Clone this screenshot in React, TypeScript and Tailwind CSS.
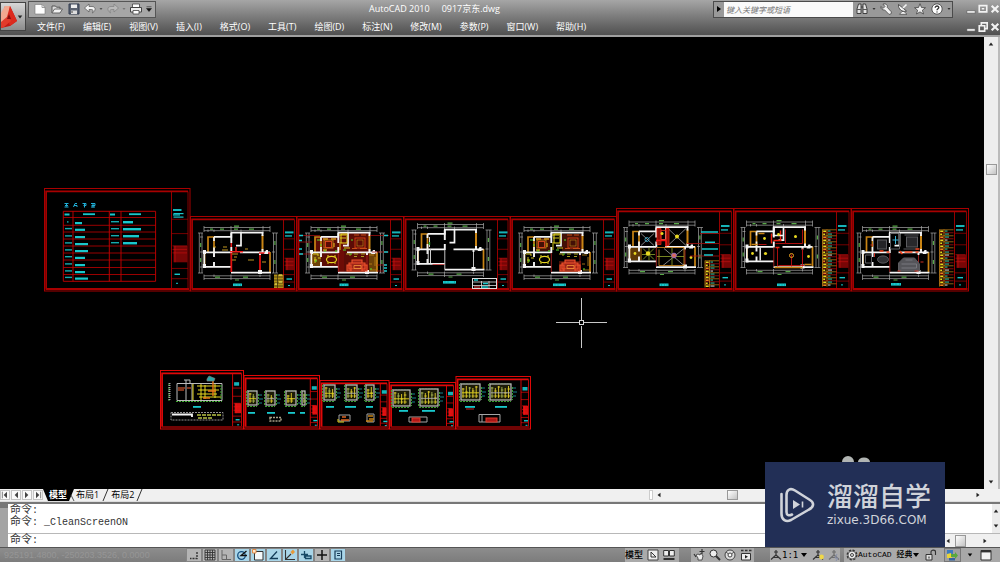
import React from 'react';

const RED = '#a80000';
const BRIGHT = '#f01414';
const CYAN = '#18c8cc';
const WALL = '#f4f4f4';
const GOLD = '#c88414';
const YELLOW = '#e8d820';
const GREEN = '#3fae30';

const menus = [
  '文件(F)', '编辑(E)', '视图(V)', '插入(I)', '格式(O)', '工具(T)',
  '绘图(D)', '标注(N)', '修改(M)', '参数(P)', '窗口(W)', '帮助(H)',
];

/* ---------- drawing sheets ---------- */

type SheetProps = { x: number; y: number; w: number; h: number; div: number; color?: string; small?: boolean };

function Sheet({ x, y, w, h, div, color = RED, small = false }: SheetProps) {
  const b = y + h;
  const r = x + w;
  const t = b - h * 0.44;
  const stampH = h * (small ? 0.17 : 0.16);
  return (
    <g fill="none" stroke={color}>
      <rect x={x} y={y} width={w} height={h} strokeWidth="1" />
      <path d={`M${x + 1.6} ${b - 2.4}V${y + 2.8}H${r - 2}`} strokeWidth="1.7" />
      <path d={`M${x + 1} ${b - 2}H${r - 1}`} strokeWidth={small ? 1.2 : 2} />
      <path d={`M${div} ${y + 3}V${b - 3}`} strokeWidth="0.9" />
      <path d={`M${r - 2} ${y + 3}V${b - 3}`} strokeWidth="0.8" />
      <path
        d={`M${div} ${y + h * 0.3}H${r - 2}M${div} ${y + h * 0.44}H${r - 2}M${div} ${b - h * 0.22}H${r - 2}M${div} ${b - h * 0.12}H${r - 2}`}
        strokeWidth="0.7"
      />
      <rect x={div + 2} y={t} width={r - div - 4.5} height={stampH} fill={small ? '#d81010' : '#780606'} stroke="none" />
      <path d={`M${div + 1} ${t}H${r - 3}M${div + 1} ${t + 3.5}H${r - 3}M${div + 1} ${t + 7}H${r - 3}M${div + 3.5} ${t}v${stampH}`} stroke={small ? BRIGHT : '#cc1010'} strokeWidth="0.6" />
      <rect x={div + 1.5} y={y + h * 0.2} width={small ? 5 : 8.5} height={small ? 3.5 : 2} fill={CYAN} stroke="none" opacity="0.9" />
      {!small && <rect x={div + 1.5} y={y + h * 0.25} width="7" height="1.6" fill={CYAN} stroke="none" opacity="0.8" />}
      <rect x={div + 3} y={b - h * 0.17} width={small ? 4 : 5.5} height="1.4" fill={CYAN} stroke="none" />
      <rect x={div + 4.5} y={b - h * 0.08} width="2" height="1" fill={CYAN} stroke="none" />
    </g>
  );
}

type PlanKind = 'demo' | 'color' | 'bare' | 'furnish' | 'ceiling' | 'light' | 'socket';

function Dims() {
  return (
    <g fill="none" stroke="#a8a8a8" strokeWidth="0.7">
      <path d="M204 227.5H270M204 230.7H270M204 226V232M208 229.5V232M214 229.5V232M231 226V232M241 229.5V232M263 226V232M270 226V232" />
      <path d="M204 275.8H270M204 278.6H270M204 274.5V280M214 274.5V277M231 274.5V280M260 274.5V277M270 274.5V280" />
      <path d="M199.3 233V273M202 233V273M198 233H203M200 237H203M200 252H203M200 267H203M198 273H203" />
      <path d="M273.5 233V273M276.3 233V273M272 233H278M272 252H275M272 273H278" />
      <path d="M210 229.2H213M220 229.2H224M234 229.2H238M249 229.2H254M234 226.2H239M215 277.2H220M243 277.2H248M235 280H239M200.7 243V247M200.7 258V262M274.9 241V245M274.9 260V264" stroke="#57a847" strokeWidth="1.2" />
    </g>
  );
}

function Walls({ kind }: { kind: PlanKind }) {
  const demo = kind === 'demo';
  return (
    <g fill="none">
      <path d="M208 252V237H214V252M204.5 252.5V266M270 252V272" stroke={GOLD} strokeWidth="1.7" />
      <path d="M262.5 235V251" stroke={GOLD} strokeWidth="2" />
      <path d="M214 236.8H231.3V232.7H263.3M241 233V245.6H236M214 237V241M214 247V252M204 252.4H231M240 252.4H270M204.3 252V266.8H231.3M231 272.6H271" stroke={WALL} strokeWidth="1.7" />
      <path d="M231.3 233V243M231.3 247V253M214 252V257M214 262V267M262.5 232V236M262.5 249V252M260 252V255" stroke={WALL} strokeWidth="1.9" />
      <path d="M231.3 253V272M260 255V272" stroke={demo ? '#e01010' : kind === 'bare' ? '#d8d8d8' : '#a82020'} strokeWidth={demo ? 1.8 : 0.9} />
      {demo && <path d="M230 251.8H243M259 253H270M236 247V252M231.3 243V247" stroke="#ee1c1c" strokeWidth="1.5" />}
      <path d="M266 250H268V254H264M258 270H262V274H258M203 250H206V254H203M202.8 264H206V268H203" fill={WALL} stroke="none" />
    </g>
  );
}

function Furniture() {
  return (
    <g fill="none">
      <rect x="234" y="234" width="6" height="9" stroke={YELLOW} />
      <path d="M232 235H239M233 238H239M233 242V250M237 248H243" stroke={YELLOW} strokeWidth="0.9" />
      <rect x="217" y="240" width="9" height="8" stroke="#c89018" strokeWidth="0.8" />
      <rect x="218.5" y="241.5" width="6" height="6" stroke="#e04a20" strokeWidth="0.9" />
      <path d="M216 239H221M224 239H229M216 250H220M227 243V247" stroke="#d09818" strokeWidth="1.3" />
      <rect x="248" y="238" width="10" height="10" stroke="#d84218" strokeWidth="0.9" />
      <rect x="250" y="240" width="6" height="6" stroke="#c89018" strokeWidth="0.6" />
      <path d="M247 235H252M254 235H259M245 248.5H250M253 248.5H260" stroke="#d05518" strokeWidth="0.9" />
      <ellipse cx="224.5" cy="259.5" rx="5" ry="3.2" stroke={YELLOW} strokeWidth="1.2" />
      <path d="M221 255V257M228 255V257M221 262V264M228 262V264" stroke={YELLOW} />
      <path d="M206 254H211V256M208 257V263M211 258H214M207 260H210" stroke={YELLOW} strokeWidth="0.9" />
      <path d="M242 263H258V269H242ZM245 260H255V263H245ZM240 265H244V271H240ZM255 265H260V271H255ZM244 271H256" stroke="#f0522c" strokeWidth="1.1" fill="#9c2418" />
      <path d="M247 265.5H254V268.5H247Z" stroke="#f59638" strokeWidth="0.8" />
      <path d="M239 254H243V256M247 254H251M254 254H258M247 256.500H250M254 256.500H257" stroke="#a8a020" strokeWidth="1" />
      <path d="M262 255H267M268 257V266M262 264H265M263 270H269" stroke="#c08818" strokeWidth="0.8" />
      <path d="M210 240H213M213 245H215M217 251H219M236 250H239M244 240H246M243 254H245M208 261H210M263 269H265M229 250V252" stroke="#55e02c" strokeWidth="1.2" />
    </g>
  );
}

function Plan({ dx, dy, kind }: { dx: number; dy: number; kind: PlanKind }) {
  return (
    <g transform={`translate(${dx} ${dy})`}>
      {kind === 'color' && (
        <g>
          <path d="M208 237H231V233H263V252H270V272H231V266H205V252H208Z" fill="#5b0c06" />
          <path d="M205 253H214V266H205ZM262 253H270V272H262Z" fill="#6b4008" />
          <path d="M231 242H237V272H231Z" fill="#6e0c06" />
        </g>
      )}
      {kind === 'furnish' && (
        <g>
          <path d="M242 234H262V251H242ZM216 238H230V251H216Z" fill="#421006" />
          <path d="M239 261H261V272H239Z" fill="#501006" />
        </g>
      )}
      {kind === 'ceiling' && <path d="M205 253H217V266H205Z" fill="#5e3a08" />}
      <Dims />
      <Walls kind={kind} />
      {(kind === 'color' || kind === 'furnish') && <Furniture />}
      {kind === 'demo' && (
        <path d="M223 247H227M222 250H228M232 254H238M232 260H236M248 260H254M245 249H248M262 262H266M213 247H216M234 257H237" stroke="#c09620" strokeWidth="1" />
      )}
      {kind === 'bare' && (
        <g fill="none">
          <path d="M216 240V250M214.7 253V266M217 252V266" stroke="#d0d0d0" strokeWidth="1" />
          <path d="M216 245V248" stroke="#39c239" strokeWidth="1.3" />
          <path d="M219 267.5H231" stroke="#cc2424" strokeWidth="0.7" />
        </g>
      )}
      {kind === 'ceiling' && (
        <g fill="none" strokeWidth="0.8">
          <path d="M243 234L261 251M261 234L243 251M239 254L259 271M259 254L238 271M216 239L229 251M229 239L216 251" stroke="#a0a0a0" />
          <path d="M232 234H236V250H232ZM241 234H244V251H241Z" fill="#8c1008" stroke="#e02010" />
          <path d="M236 236H241V245H236Z" stroke="#e03020" />
          <path d="M232 253H259V271H234V255" stroke="#d58c20" />
          <path d="M218 254L229 265M229 254L218 265M217 260H230M224 253V266M232 262H259M247 253V271" stroke="#93a62a" />
          <path d="M231 246H241V252" stroke="#f01414" strokeWidth="1.4" />
          <g fill={YELLOW}>
            <circle cx="237" cy="239" r="1.5" /><circle cx="252" cy="242" r="2" /><circle cx="223" cy="259" r="2.2" /><circle cx="210" cy="259" r="1.4" /><circle cx="266" cy="263" r="1.4" />
          </g>
          <circle cx="222" cy="245" r="2" stroke="#38b8d8" />
          <circle cx="249" cy="261" r="2.4" fill="#d86a5a" stroke="#8a6ad0" />
        </g>
      )}
      {kind === 'light' && (
        <g fill="none">
          <path d="M233 249H243V235M243 249H260V235M235 253V272M249 260V272M260 254V272M216 250H224M236 271H262" stroke="#c01010" strokeWidth="0.9" />
          <path d="M238 236V246M231 246H239M229 239V249M233 253H237" stroke="#f02010" strokeWidth="1.4" />
          <path d="M209 250H215M232 273H260M262 270H269M216 239H222" stroke={GOLD} strokeWidth="1.6" />
          <path d="M217.7 253V266M231 232V241H241" stroke={WALL} strokeWidth="1.4" />
          <g fill={YELLOW}>
            <circle cx="222" cy="244" r="1.4" /><circle cx="236" cy="240" r="1.4" /><circle cx="253" cy="242" r="1.5" /><circle cx="210" cy="259" r="1.4" /><circle cx="223" cy="259" r="1.6" /><circle cx="266" cy="262" r="1.4" />
          </g>
          <circle cx="249" cy="261" r="2" stroke="#e8a020" />
        </g>
      )}
      {kind === 'socket' && (
        <g fill="none" stroke="#5c5c60" strokeWidth="1">
          <rect x="248" y="237" width="11" height="10" fill="#28282b" />
          <rect x="219" y="240" width="9" height="9" fill="#242427" />
          <path d="M232 233H241V249H232ZM246 235H260M245 249H260M215 239V251" />
          <ellipse cx="224.5" cy="259.5" rx="5.5" ry="3.6" fill="#303034" />
          <path d="M207 255H213V263H207Z" />
          <path d="M240 263L245 258H256L261 264V271H240Z" fill="#55555a" />
          <path d="M243 264H258V268H243M247 260H254" stroke="#78787e" />
          <path d="M237 236V244M234 240H240" stroke="#3ab6d8" />
          <path d="M246 252H254M228 252H231M241 251L244 254M257 249H261M221 251H225M257 252H260" stroke="#f04018" strokeWidth="1.7" />
          <path d="M212 245H215M216 253V257M239 271H242M256 271H260M262 262H265" stroke="#d03020" />
        </g>
      )}
    </g>
  );
}

function Legend({ x, y, rows, w }: { x: number; y: number; rows: number; w: number }) {
  return (
    <g>
      {Array.from({ length: rows }, (_, i) => (
        <g key={i}>
          <rect x={x} y={y + i * 3} width={w} height="0.7" fill={i % 2 ? '#b81010' : GOLD} />
          <rect x={x + 0.7} y={y + i * 3 + 1} width={i % 3 === 1 ? 2 : 3} height="1.5" fill={i % 4 === 2 ? '#f08020' : YELLOW} />
          <rect x={x + 5.5} y={y + i * 3 + 1} width={i % 3 === 0 ? 2.5 : 4} height="1.1" fill={i % 5 === 3 ? '#c8c8c8' : '#38b898'} />
        </g>
      ))}
      <path d={`M${x} ${y}V${y + rows * 3}M${x + 4.5} ${y}V${y + rows * 3}`} stroke={GOLD} strokeWidth="0.8" />
    </g>
  );
}

function Caption({ x, y, w = 9 }: { x: number; y: number; w?: number }) {
  return (
    <g>
      <rect x={x} y={y} width={w} height="2.6" fill={CYAN} />
      <path d={`M${x + 2} ${y}v2.4M${x + 5} ${y}v2.4M${x + w - 1.5} ${y}v2.4`} stroke="#0a8088" strokeWidth="0.5" />
    </g>
  );
}

const indexRows = [222, 228.7, 236, 243, 250, 256.8, 264, 271, 277.5];
const leftBars = [7, 10, 10, 13, 13, 10, 10, 10, 13];
const rightBars = [10, 18, 16, 14];

function IndexSheet() {
  return (
    <g>
      <path d="M63.3 211.3H155.6V281.3H63.3ZM73 211.3V281.3M109.3 211.3V281.3M121 211.3V281.3" fill="none" stroke="#c80000" strokeWidth="0.9" />
      {[217.5, 225.3, 232, 239, 246, 253, 260, 267.5, 274.5].map((y) => (
        <path key={y} d={`M63.3 ${y}H155.6`} stroke="#c00000" strokeWidth="0.8" />
      ))}
      <g fill="none" stroke="#20b0d8" strokeWidth="1">
        <path d="M64.500 203.500H68.500M65 205.500H68M66.500 203V206.500M64.500 207H68.500M73.500 207L75 203.500H77M74 205.500H77V207M82.500 203.500H86V205.500H83.500M84.500 203V207.500M91 203.500H95V205.500H91.500M93 203V207.500M91 207H95" />
      </g>
      <g fill={CYAN}>
        <rect x="64.5" y="213.5" width="5" height="2" /><rect x="83" y="213.3" width="12" height="1.8" />
        <rect x="110" y="213.5" width="5" height="2" /><rect x="129" y="213.3" width="12" height="1.8" />
        {indexRows.map((y, i) => (
          <g key={y}>
            <rect x={i ? 65 : 67} y={y - 0.8} width={i ? 7 : 1.5} height="1.4" opacity="0.85" />
            <rect x="75" y={y} width={leftBars[i]} height="2.2" />
          </g>
        ))}
        {rightBars.map((w, i) => (
          <g key={w}>
            <rect x="111" y={221 + i * 7} width="8" height="1.4" opacity="0.85" />
            <rect x="123" y={221 + i * 7} width={w} height="2.4" />
          </g>
        ))}
        <rect x="173.5" y="213" width="10" height="1.2" /><rect x="173.5" y="216.500" width="10" height="1.2" />
      </g>
    </g>
  );
}

/* Small elevation block: grey frame, coloured hatching and leader ticks. */
function Elevation({ x, y, w, h, v = 0 }: { x: number; y: number; w: number; h: number; v?: number }) {
  const bars = Math.max(1, Math.floor(w / 3.5));
  return (
    <g fill="none" strokeWidth="0.9">
      <rect x={x} y={y} width={w} height={h} fill="#1c1c08" stroke="#b4b4b4" strokeWidth="1.3" />
      {Array.from({ length: bars }, (_, i) => (
        <path
          key={i}
          d={`M${x + 2 + i * 3.3} ${y + 2 + ((i + v) % 3)}V${y + h - 2}M${x + 1 + i * 3.3} ${y + 3 + ((i * 3 + v) % 7)}h2.5M${x + 1 + i * 3.3} ${y + h - 4}h2.8`}
          stroke={(i + v) % 3 === 1 ? '#a8b850' : '#e4d02c'}
        />
      ))}
      <path d={`M${x + 1} ${y + h * 0.55}H${x + w - 1}`} stroke={v % 2 ? '#b0b0b0' : YELLOW} />
      <path d={`M${x - 1.5} ${y}V${y + h + 1}M${x - 1} ${y + h + 1.5}H${x + w}M${x + w + 1.5} ${y + 3}V${y + h}`} stroke={GREEN} strokeDasharray="2 1" />
      <path d={`M${x + w + 2} ${y + 4}h3M${x + w + 2} ${y + 8}h4M${x + w + 2} ${y + 12}h3`} stroke="#188f98" />
      <path d={`M${x - 1} ${y - 0.5}H${x + w}`} stroke="#7a8a70" strokeDasharray="2 1" />
    </g>
  );
}

const lowerCaptions = [
  [193, 406, 8], [248, 412, 7], [267, 412, 8], [288, 412, 7], [300, 412, 5], [326, 406, 8],
  [345, 406, 11], [366, 406, 7], [399, 410, 9], [422, 410, 13], [465, 406, 10], [495, 406, 12],
];

function LowerRow() {
  return (
    <g>
      <Sheet x={160.5} y={370.5} w={83} h={58.5} div={232.6} color="#e00808" small />
      <Sheet x={244} y={375.5} w={75.5} h={53.5} div={310.3} color="#e00808" small />
      <Sheet x={320} y={380.5} w={69} h={48.5} div={380.3} color="#e00808" small />
      <Sheet x={389.5} y={382.5} w={66} h={46.5} div={446.5} color="#e00808" small />
      <Sheet x={456} y={376.5} w={74.5} h={52.5} div={521} color="#e00808" small />
      <g fill="none" strokeWidth="1">
        <path d="M177 383.5H222V400.500H177ZM186 380V400M192 383V400M184 380H190V384" stroke="#bcbcbc" />
        <path d="M178 388H185M178 390H184M187 388H191" stroke="#a84424" strokeWidth="1.5" />
        <path d="M193 384V400M197 386H220M198 390H219M197 394H217M199 397H221M201 384V400M205 385V399M215 384V398" stroke={YELLOW} />
        <path d="M213 381V396M208 391H216M203 398H210" stroke="#e87818" strokeWidth="1.4" />
        <path d="M207 379L209 376L215 378.500L214 381H207Z" fill="#2aa8a8" stroke="#808080" strokeWidth="0.700" />
        <path d="M176 401.500H222M221 385V399M169 384V401" stroke={GREEN} strokeDasharray="2 1" />
        <path d="M169.500 383V400" stroke="#a8a8a8" strokeDasharray="1 1" strokeWidth="2" />
        <path d="M171 412.500H223V420H171Z" stroke="#929292" strokeDasharray="2 1" />
        <path d="M172 414.500H192V417" stroke={WALL} strokeWidth="1.8" />
        <path d="M197 415H221M198 418H212" stroke="#b8c444" strokeWidth="1.5" strokeDasharray="4 1" />
      </g>
      <Elevation x={248} y={391} w={9} h={14} />
      <Elevation x={266} y={391} w={9} h={14} v={1} />
      <Elevation x={286} y={391} w={10} h={14} v={2} />
      <Elevation x={302} y={391} w={3} h={14} v={1} />
      <Elevation x={324} y={385} w={11} h={15} />
      <Elevation x={346} y={385} w={11} h={15} v={1} />
      <Elevation x={366} y={385} w={8} h={15} v={2} />
      <Elevation x={393} y={390} w={17} h={16} />
      <Elevation x={420} y={389} w={18} h={17} v={1} />
      <Elevation x={461} y={384} w={19} h={16} v={2} />
      <Elevation x={490} y={384} w={21} h={16} v={1} />
      <g fill="none" stroke="#a4a4a4">
        <path d="M270 417.500H281V421H270Z" stroke="#a8a088" strokeWidth="1.5" strokeDasharray="2 1" />
        <path d="M339 415H350V421H339Z" /><path d="M342 417H346M341 420H349" stroke="#e06420" strokeWidth="1.6" />
        <path d="M338 419V422H344" stroke={YELLOW} />
        <path d="M367 414H374V422H367Z" /><path d="M368 416H373M369 419H374M366 421H373" stroke={GOLD} strokeWidth="1.4" />
        <path d="M409 417H427V422H409Z" /><rect x="412" y="418" width="8" height="4" fill="#b01818" stroke="#e03828" />
        <path d="M479 414.500H500V422H479ZM482 414V422" /><rect x="486" y="418" width="11" height="4" fill="#a81818" stroke="#e03828" />
      </g>
      <g fill={CYAN}>
        {lowerCaptions.map(([x, y, w]) => <rect key={x} x={x} y={y} width={w} height="1.8" />)}
      </g>
      <path d="M466 409H474" stroke="#c02020" />
    </g>
  );
}

function Drawing() {
  return (
    <svg viewBox="0 37 984 452" preserveAspectRatio="xMinYMin meet" className="block h-full w-full" aria-label="0917京东.dwg">
      <Sheet x={44.5} y={188.5} w={145.5} h={102.5} div={171.5} />
      <IndexSheet />
      <Sheet x={190.5} y={216.5} w={106} h={74.5} div={283.5} />
      <Sheet x={297} y={216.5} w={106.5} h={74.5} div={390.5} />
      <Sheet x={404} y={216.5} w={106} h={74.5} div={497.5} />
      <Sheet x={510.5} y={216.5} w={106} h={74.5} div={603.5} />
      <Sheet x={616.5} y={208.5} w={117} h={82.5} div={719.5} />
      <Sheet x={734} y={208.5} w={117} h={82.5} div={836.5} />
      <Sheet x={851.5} y={208.5} w={117} h={82.5} div={954.5} />
      <Plan dx={0} dy={0} kind="demo" />
      <Plan dx={107} dy={0} kind="color" />
      <Plan dx={213.5} dy={-3} kind="bare" />
      <Plan dx={320} dy={0} kind="furnish" />
      <Plan dx={425} dy={-5.5} kind="ceiling" />
      <Plan dx={542.5} dy={-5.5} kind="light" />
      <Plan dx={658.5} dy={0} kind="socket" />
      <Caption x={233} y={283.5} />
      <Caption x={339.5} y={283.5} />
      <Caption x={443} y={281} w={13} />
      <Caption x={553} y={283.5} w={13} />
      <Caption x={659.5} y={283.5} />
      <Caption x={777} y={283.5} />
      <Caption x={891} y={283} w={10} />
      <path d="M299 235.5H320M299 242H312M299 254H311M370 235.5H389M372 252H389M377 265H386M377 271H386" stroke="#b01010" strokeWidth="0.7" />
      <path d="M299 235.5H303M299 240.5H302M299 249H302M299 254H303M384 235.5H388M384 252H388M384 265H387M384 268H387M384 271H387" stroke={CYAN} strokeWidth="1.3" />
      <rect x="274" y="274.5" width="9.5" height="13.5" fill="#b09018" />
      <path d="M274 277H283M274 280H283M274 283H283M274 286H283M277.500 274V288" stroke="#302808" strokeWidth="0.7" />
      <path d="M279 275H282M279 282H282M275 284H277" stroke="#f5f060" strokeWidth="1.2" />
      <g>
        <rect x="472.5" y="278.5" width="24" height="10" fill="none" stroke="#dcdcdc" />
        <path d="M473 282H496M473 285.500H496M481.500 281V288M489 281V288" stroke="#dcdcdc" strokeWidth="0.8" />
        <path d="M474 280H478M483 283.500H488M482 287H488" stroke={CYAN} strokeWidth="1.6" />
        <path d="M474 287H480" stroke="#d04040" strokeWidth="1.2" />
      </g>
      <path d="M700 233.500H719M687 243.500H719M690 256H719" stroke="#a81010" strokeWidth="0.8" />
      <path d="M701 232H718M705 242.300H715M702 249H718M704 255H713" stroke={CYAN} strokeWidth="1.5" />
      <Legend x={705} y={260.5} rows={9} w={14} />
      <Legend x={822.5} y={229.5} rows={19} w={14} />
      <Legend x={939.5} y={229.5} rows={19} w={14} />
      <LowerRow />
      <path d="M581.500 298V320M581.500 326V348M556 322.500H579M584 322.500H607" stroke="#c8c8c8" />
      <rect x="579.5" y="320.5" width="4" height="4" fill="none" stroke="#d8d8d8" />
    </svg>
  );
}

/* ---------- window chrome ---------- */

function Glyph({ size = 'h-3 w-3', children }: { size?: string; children: React.ReactNode }) {
  return <svg viewBox="0 0 12 12" className={`${size} block shrink-0`} fill="none" aria-hidden="true">{children}</svg>;
}

function IconButton({ label, className = '', children }: { label: string; className?: string; children: React.ReactNode }) {
  return (
    <button type="button" aria-label={label} title={label} className={`flex shrink-0 items-center justify-center ${className}`}>
      {children}
    </button>
  );
}

function Tri({ dir, className = 'h-2 w-2 text-[#333]' }: { dir: 'up' | 'down' | 'left' | 'right'; className?: string }) {
  const d = { up: 'M1 6L4 2L7 6Z', down: 'M1 2L4 6L7 2Z', left: 'M6 1L2 4L6 7Z', right: 'M2 1L6 4L2 7Z' }[dir];
  return <svg viewBox="0 0 8 8" className={`${className} block shrink-0`} aria-hidden="true"><path d={d} fill="currentColor" /></svg>;
}

function QuickAccess() {
  return (
    <div className="flex h-[17px] w-32 shrink-0 items-center border border-[#555] bg-[#a6a6a6] pl-0.5">
      <IconButton label="新建" className="w-[17px]"><Glyph><path d="M1 1.5H8L11 4.500V11H1Z" fill="#fff" stroke="#777" strokeWidth=".6" /><path d="M8 1.500V4.500H11" stroke="#888" strokeWidth=".8" /></Glyph></IconButton>
      <IconButton label="打开" className="w-[17px]"><Glyph><path d="M1 10V3H4.500L5.500 4.200H9V6" stroke="#555" fill="#ddd" /><path d="M1 10L3.500 6H11.500L9 10Z" fill="#f2f2f2" stroke="#666" /></Glyph></IconButton>
      <IconButton label="保存" className="w-[17px]"><Glyph><path d="M1 1H11V11H1Z" fill="#5b6270" stroke="#333d50" /><path d="M3 1.500H9V5H3Z" fill="#eee" /><path d="M3 7.500H9V11H3Z" fill="#ddd" /><path d="M4 8V10" stroke="#444" /></Glyph></IconButton>
      <IconButton label="放弃" className="w-4"><Glyph><path d="M5 1L.5 5L5 9V6.500H7.500C9 6.500 9.500 7.500 8.500 10C12.500 7 11.500 3.500 8 3.500H5Z" fill="#f4f4f4" stroke="#555" strokeWidth=".7" /></Glyph></IconButton>
      <Tri dir="down" className="h-1 w-1.5 text-[#555]" />
      <IconButton label="重做" className="w-[17px]"><Glyph><path d="M7 1L11.500 5L7 9V6.500H4.500C3 6.500 2.500 7.500 3.500 10C-.5 7 .5 3.500 4 3.500H7Z" fill="#b9b9b9" stroke="#808080" strokeWidth=".7" /></Glyph></IconButton>
      <Tri dir="down" className="h-1 w-1.5 text-[#777]" />
      <IconButton label="打印" className="w-[18px]"><Glyph><path d="M2.500 1H9.500V4.500H2.500Z" fill="#fff" stroke="#444" strokeWidth=".8" /><path d="M.5 4.500H11.500V9H.5Z" fill="#eee" stroke="#444" /><path d="M3 7.500H9V11H3Z" fill="#fff" stroke="#444" strokeWidth=".8" /></Glyph></IconButton>
      <IconButton label="自定义快速访问工具栏" className="w-2"><Glyph size="h-1.5 w-1.5"><path d="M1 1.500H11M1 5H11L6 11Z" fill="#111" stroke="#111" /></Glyph></IconButton>
    </div>
  );
}

function InfoCenter() {
  return (
    <div className="flex h-[17px] w-60 shrink-0 items-center border border-[#4b4b4b] bg-[#999]">
      <IconButton label="展开" className="w-2.5"><Tri dir="right" className="h-2 w-2 text-black" /></IconButton>
      <input aria-label="搜索" placeholder="键入关键字或短语" className="h-full w-[131px] bg-[#fafafa] pl-0.5 text-[8px] italic outline-none placeholder:text-[#777]" />
      <IconButton label="搜索按钮" className="w-[18px]"><Glyph><path d="M2.500 1H5V10.500H1V6ZM7 1H9.500L11 6V10.500H7ZM5 4H7" stroke="#333" fill="#e3e3e3" strokeWidth=".9" /><path d="M1 6.500H5M7 6.500H11" stroke="#555" /></Glyph></IconButton>
      <Tri dir="down" className="h-1 w-1.5 text-[#333]" />
      <IconButton label="速博应用中心" className="w-[17px]"><Glyph><path d="M.8 3.500L3 5.500L5 3.500L3 1.200C6 .2 8 2.200 7.200 4.300L11.300 8.800C11.800 10.700 10.300 11.800 8.800 11.200L4.600 6.900C2.300 7.400 .5 5.700 .8 3.500Z" fill="#f4f4f4" stroke="#444" strokeWidth=".8" /></Glyph></IconButton>
      <IconButton label="通讯中心" className="w-[17px]"><Glyph><path d="M1.500 1.500C1 6 5 9.500 9.500 8Z" fill="#f4f4f4" stroke="#333" strokeWidth=".8" /><path d="M6 5L9.500 1.500" stroke="#f4f4f4" strokeWidth="1.600" /><path d="M5 8.500L2.500 11.300H10L7 8.500Z" fill="#f4f4f4" stroke="#444" strokeWidth=".7" /></Glyph></IconButton>
      <IconButton label="收藏夹" className="w-[17px]"><Glyph><path d="M6 .7L7.500 4.500L11.500 4.700L8.400 7.200L9.500 11L6 8.900L2.500 11L3.600 7.200L.5 4.700L4.500 4.500Z" fill="#eee" stroke="#444" strokeWidth=".8" /></Glyph></IconButton>
      <IconButton label="帮助" className="w-[18px]"><Glyph><circle cx="6" cy="6" r="5.2" fill="#fff" stroke="#555" /><path d="M4.200 4.700C4.200 2.400 8 2.500 7.800 4.600C7.700 5.700 6 5.800 6 7.300M6 8.500V9.600" stroke="#333" strokeWidth="1.3" /></Glyph></IconButton>
      <Tri dir="down" className="h-1 w-1.5 text-[#333]" />
    </div>
  );
}

function WindowButtons({ restore = false }: { restore?: boolean }) {
  return (
    <div className="flex shrink-0 items-center gap-0.5">
      <IconButton label="最小化" className="w-2.5"><Glyph size="h-2.5 w-2.5"><path d="M1 8H11V11H1Z" fill="#f2f2f2" stroke="#444" strokeWidth=".6" /></Glyph></IconButton>
      <IconButton label="还原" className="w-2.5">
        <Glyph size="h-2.5 w-2.5">
          {restore ? <path d="M4 4V1H11V8H8M1.500 4.500H8V11H1.500Z" stroke="#f2f2f2" strokeWidth="2" /> : <path d="M1.500 2H10.500V9.500H1.500ZM4.500 5.700H7.500" stroke="#f2f2f2" strokeWidth="2" />}
        </Glyph>
      </IconButton>
      <IconButton label="关闭" className="w-2.5"><Glyph size="h-2.5 w-2.5"><path d="M2 2L10 10M10 2L2 10" stroke="#f2f2f2" strokeWidth="2.6" /></Glyph></IconButton>
    </div>
  );
}

function Header() {
  return (
    <header className="flex shrink-0 border-b-2 border-[#a0a0a0] bg-linear-to-b from-[#a6a6a6] to-[#505050] text-white">
      <button type="button" aria-label="应用程序菜单" className="mt-0.5 flex h-[29px] w-[26px] shrink-0 items-center border border-[#444] bg-linear-to-b from-[#d8d8d8] to-[#8c8c8c]">
        <svg viewBox="0 0 16 24" className="h-6 w-4 shrink-0" aria-hidden="true">
          <path d="M4 1L9 1L16 16L9 21L0 23V14Z" fill="#c41a14" />
          <path d="M4 1L9 1L8 11L0 19V8Z" fill="#f2a890" />
          <path d="M9 1L16 16L9 21L6 12Z" fill="#dc2a1e" />
          <path d="M0 17L7 11L10 16L3 22L0 23Z" fill="#e33b2b" />
          <path d="M8 9L10 14L6 14Z" fill="#851010" />
        </svg>
        <Tri dir="down" className="h-1.5 w-1.5 text-[#222]" />
      </button>
      <div className="flex min-w-0 flex-1 flex-col">
        <div className="flex h-[18px] items-center pl-0.5">
          <QuickAccess />
          <h1 className="min-w-0 flex-1 truncate text-center text-[9px] leading-4">AutoCAD 2010<span className="ml-3">0917京东.dwg</span></h1>
          <InfoCenter />
          <div className="flex w-[47px] shrink-0 justify-end"><WindowButtons /></div>
        </div>
        <div className="flex h-[17px] items-center">
          <nav className="flex flex-1 gap-[18px] pl-[11px] text-[9px] leading-4">
            {menus.map((m) => <button key={m} type="button" className="shrink-0 whitespace-nowrap">{m}</button>)}
          </nav>
          <WindowButtons restore />
        </div>
      </div>
    </header>
  );
}

function Thumb({ className }: { className: string }) {
  return <div className={`border border-[#999] bg-linear-to-br from-white to-[#c4c4c4] ${className}`} />;
}

function LayoutTabs() {
  return (
    <div className="flex h-3 shrink-0 items-center bg-[#f0f0f0] text-[9px] leading-3 text-black">
      <div className="flex shrink-0 gap-px">
        {['第一个', '上一个', '下一个', '最后一个'].map((l, i) => (
          <IconButton key={l} label={l} className="h-2.5 w-2.5 border border-[#c4c4c4] bg-[#fafafa]">
            <Glyph size="h-2 w-2">
              {i < 2 ? <path d="M9 1L4 6L9 11Z" fill="#444" /> : <path d="M3 1L8 6L3 11Z" fill="#444" />}
              {i === 0 && <path d="M2 1V11" stroke="#444" />}
              {i === 3 && <path d="M10 1V11" stroke="#444" />}
            </Glyph>
          </IconButton>
        ))}
      </div>
      <div className="flex h-3 flex-1 items-center" role="tablist" aria-label="布局">
        <svg viewBox="0 0 6 12" className="h-3 w-1.5"><path d="M0 0H6V12H5Z" fill="#000" /></svg>
        <button type="button" role="tab" aria-selected="true" className="h-3 bg-black font-bold text-white">模型</button>
        <svg viewBox="0 0 9 12" className="h-3 w-[9px]"><path d="M0 0H7L2 12H0Z" fill="#000" /><path d="M4 6L7 12" stroke="#555" /></svg>
        <button type="button" role="tab" aria-selected="false" className="h-3">布局1</button>
        <svg viewBox="0 0 12 12" className="h-3 w-3"><path d="M9 0L4 12" stroke="#333" /></svg>
        <button type="button" role="tab" aria-selected="false" className="h-3">布局2</button>
        <svg viewBox="0 0 12 12" className="h-3 w-3"><path d="M8 0L3 12" stroke="#333" /></svg>
      </div>
      <div className="flex w-[351px] shrink-0 items-center gap-0.5">
        <div className="h-2.5 w-1 border border-[#ccc] bg-white" />
        <IconButton label="向左滚动" className="w-2"><Tri dir="left" className="h-1.5 w-1.5 text-[#222]" /></IconButton>
        <div className="flex flex-1 justify-start pl-[62px]"><Thumb className="h-2.5 w-[11px]" /></div>
        <IconButton label="向右滚动" className="w-2"><Tri dir="right" className="h-1.5 w-1.5 text-[#222]" /></IconButton>
        <div className="w-4" />
      </div>
    </div>
  );
}

function Prompt() {
  return <span className="text-[11px]">命令</span>;
}

function CommandPane() {
  return (
    <section className="flex h-[43px] shrink-0 bg-white font-['Liberation_Mono','Noto_Sans_CJK_SC',monospace] text-[10px] text-[#333]" aria-label="命令行">
      <div className="w-2 shrink-0 border-t-4 border-[#777] bg-[#a4a4a4]" />
      <div className="flex min-w-0 flex-1 flex-col">
        <div className="flex flex-1 overflow-hidden">
          <div className="flex-1 pl-0.5">
            <p className="h-3 leading-3"><Prompt />:</p>
            <p className="h-3 leading-3"><Prompt />: _CleanScreenON</p>
          </div>
          <div className="flex w-2 shrink-0 flex-col items-center justify-between bg-[#ececec] py-1">
            <Tri dir="up" className="h-1.5 w-1.5 text-[#222]" />
            <Tri dir="down" className="h-1.5 w-1.5 text-[#222]" />
          </div>
        </div>
        <div className="flex h-[14px] items-center border-t border-[#b8b8b8] pl-0.5">
          <label htmlFor="cmd" className="shrink-0 leading-[14px]"><Prompt />:</label>
          <input id="cmd" className="h-3 min-w-0 flex-1 bg-transparent pl-1 outline-none" />
          <div className="flex h-full w-[55px] shrink-0 items-center bg-[#f0f0f0]">
            <Tri dir="left" className="h-1.5 w-1.5 text-[#222]" />
            <Thumb className="ml-1 h-3 w-[11px]" />
            <Tri dir="right" className="ml-4 h-1.5 w-1.5 text-[#222]" />
          </div>
        </div>
      </div>
    </section>
  );
}

const toggles: { label: string; on: boolean; icon: React.ReactNode }[] = [
  { label: '捕捉模式', on: false, icon: <path d="M9 3V9.500H2" stroke="#333" strokeWidth="1.4" strokeDasharray="2 1" /> },
  { label: '栅格显示', on: false, icon: <path d="M1 1H11V11H1ZM3.500 1V11M6 1V11M8.500 1V11M1 3.500H11M1 6H11M1 8.500H11" stroke="#333" strokeWidth=".9" /> },
  { label: '正交模式', on: false, icon: <path d="M2 1V10.500H11M2 6H6.500V10.500" stroke="#666" /> },
  { label: '极轴追踪', on: true, icon: <><circle cx="5.5" cy="6.5" r="3.8" stroke="#155080" strokeWidth="1.3" /><path d="M10.500 2L5 6.500H11" stroke="#111" strokeWidth="1.3" /></> },
  { label: '对象捕捉', on: true, icon: <><path d="M2.500 2.500H11V11H2.500Z" stroke="#333" fill="#f4f8fa" /><path d="M.5.5H4V4H.5Z" stroke="#e08a48" fill="#ffe6c8" /></> },
  { label: '对象捕捉追踪', on: true, icon: <path d="M9 2.500L2.500 9.500H10" stroke="#123c58" strokeWidth="1.3" /> },
  { label: '动态UCS', on: true, icon: <><path d="M1.500 1V10.500H11M1.500 10.500L7 5" stroke="#333" strokeWidth="1.1" /><path d="M9 .5L11 3L8.500 5.500L6.500 3Z" fill="#e79a38" /></> },
  { label: '动态输入', on: true, icon: <path d="M4.500 2V9M1 5.500H8M5.500 7H11V9.500H5.500Z" stroke="#174a68" strokeWidth="1.3" /> },
  { label: '线宽', on: false, icon: <path d="M6 1V11M1 6H11" stroke="#111" strokeWidth="1.5" /> },
  { label: '快捷特性', on: true, icon: <path d="M3 2H9.500V10H3ZM5 4.500H8M5 6.500H8" stroke="#173c58" strokeWidth="1.2" /> },
];

function StatusBar() {
  const person = <path d="M6 1V6L1 10.500M6 6L11 10.500M4 3H8M3.500 8.500H8.500" stroke="#333" strokeWidth="1.2" />;
  return (
    <footer className="flex h-[15px] shrink-0 items-center border-t border-[#555] bg-linear-to-b from-[#8d8d8d] to-[#7c7c7c] text-[9px] leading-3 text-black">
      <output className="w-[186px] shrink-0 pl-1 font-['Liberation_Sans',sans-serif] text-[#969696]">925191.4800, -250203.3526, 0.0000</output>
      <div className="flex h-full">
        {toggles.map((t) => (
          <button key={t.label} type="button" aria-label={t.label} aria-pressed={t.on} className={`flex h-full w-4 items-center justify-center border border-[#858585] ${t.on ? 'bg-[#a9d5e8]' : 'bg-[#b4b4b4]'}`}>
            <Glyph>{t.icon}</Glyph>
          </button>
        ))}
      </div>
      <div className="flex-1" />
      <div className="flex h-full w-[375px] shrink-0 items-center">
        <div className="flex h-full w-[54px] items-center gap-1 bg-[#aaa]">
          <button type="button" className="whitespace-nowrap font-medium">模型</button>
          <IconButton label="布局"><Glyph><path d="M1 1H11V11H1Z" fill="#eee" stroke="#444" /><path d="M4 3V8H9L4 3" stroke="#333" /></Glyph></IconButton>
          <IconButton label="快速查看布局"><Glyph><path d="M.7 1.500H5.500V7H.7ZM6.500 1.500H11.300V7H6.500Z" fill="#eee" stroke="#333" /><path d="M.5 10H11.500" stroke="#222" strokeWidth="1.8" /></Glyph></IconButton>
        </div>
        <div className="w-3" />
        <div className="flex h-full w-[63px] items-center justify-between bg-[#aaa] px-0.5">
          <IconButton label="平移"><Glyph><path d="M3 6L5 9V11H9L10 7L8 4L7 6L5 5Z" fill="#eee" stroke="#333" strokeWidth=".8" /><path d="M9 0V5M6.500 2.500H11.500M1 5L3 8" stroke="#333" strokeWidth="1.2" /></Glyph></IconButton>
          <IconButton label="缩放"><Glyph><circle cx="4.5" cy="4.5" r="3.5" fill="#eee" stroke="#333" /><path d="M7 7L11 11" stroke="#333" strokeWidth="2" /></Glyph></IconButton>
          <IconButton label="控制盘"><Glyph><circle cx="6" cy="6" r="5" fill="#ddd" stroke="#444" /><circle cx="6" cy="6" r="2" fill="#fff" stroke="#444" /><path d="M2 3L4.500 5M10 3L7.500 5" stroke="#555" /></Glyph></IconButton>
          <IconButton label="动画"><Glyph><path d="M1.500 4.500H10.500V11H1.500Z" fill="#eee" stroke="#333" /><path d="M1 1.500H3.500M5 1.500H7.500M9 1.500H11.500" stroke="#333" strokeWidth="1.6" /><path d="M5 6L8 7.800L5 9.500Z" fill="#222" /></Glyph></IconButton>
        </div>
        <div className="w-4" />
        <div className="flex h-full w-[70px] items-center bg-[#aaa]">
          <Glyph>{person}</Glyph>
          <div className="flex items-center">
            <select aria-label="注释比例" className="w-4 appearance-none bg-transparent font-['DejaVu_Sans_Mono',monospace] text-[9px] outline-none"><option>1:1</option></select>
            <Tri dir="down" className="ml-0.5 h-2 w-2 text-black" />
          </div>
          <IconButton label="注释可见性" className="ml-0.5 w-4"><Glyph>{person}<circle cx="9.5" cy="8" r="2.4" fill="#f0d848" /></Glyph></IconButton>
          <IconButton label="自动缩放" className="w-4 opacity-50"><Glyph>{person}<path d="M9 5L7 9H10L8 12" stroke="#6677aa" /></Glyph></IconButton>
        </div>
        <div className="ml-1 flex h-full w-[77px] items-center bg-[#aaa] pl-0.5">
          <Glyph><circle cx="6" cy="6" r="4.8" stroke="#333" strokeWidth="1.4" strokeDasharray="2.2 1.570" /><circle cx="6" cy="6" r="4" fill="#e8e8e8" stroke="#444" strokeWidth=".8" /><circle cx="6" cy="6" r="1.5" stroke="#444" /></Glyph>
          <select aria-label="工作空间" className="w-[54px] appearance-none bg-transparent font-['Liberation_Mono','Noto_Sans_CJK_SC',monospace] text-[8px] font-medium outline-none"><option>AutoCAD 经典</option></select>
          <Tri dir="down" className="h-2 w-2 text-black" />
        </div>
        <div className="flex h-full flex-1 items-center justify-between bg-[#a8a8a8] pr-2 pl-1">
          <IconButton label="锁定"><Glyph><path d="M1 5.500H7V11H1Z" fill="#ddd" stroke="#333" /><path d="M6 5V3C6 .5 10.500 .5 10.500 3V6M4 7.500V9.500" stroke="#333" strokeWidth="1.1" /></Glyph></IconButton>
          <IconButton label="硬件加速" className="h-full w-[17px] border border-[#777] bg-[#a0a0a0]"><Glyph><path d="M1 1H7V5H1Z" fill="#3c7abf" /><path d="M1 5L5 4L6 9L1 9Z" fill="#e8d338" /><path d="M5 5H9V3L12 6.500L9 10V8H5Z" fill="#58a83c" /><path d="M3 9H9V11.500H3Z" fill="#3565a0" /></Glyph></IconButton>
          <Tri dir="down" className="h-1.5 w-1.5 text-black" />
          <IconButton label="全屏显示"><Glyph><path d="M1 1.500H11V11H1Z" fill="#f4f4f4" stroke="#333" /><path d="M1 2.500H11" stroke="#333" strokeWidth="1.8" /></Glyph></IconButton>
        </div>
      </div>
    </footer>
  );
}

function Watermark() {
  return (
    <aside className="absolute right-[55px] bottom-[15px] flex h-[85px] w-[180px] items-center bg-[#222f56] pl-[14px] text-[#d0d3da]">
      <svg viewBox="0 0 28 6" className="absolute -top-1.5 left-[77px] h-1.5 w-7" aria-hidden="true">
        <path d="M0 6A6 6 0 0 1 12 6ZM16 6A6 4.500 0 0 1 28 6Z" fill="#b1b5b3" />
      </svg>
      <svg viewBox="0 0 36 36" className="h-9 w-9 shrink-0" fill="none" aria-hidden="true">
        <path d="M2.500 7V27C2.500 33 7 35.500 12 33L30 22.500C35.500 19.500 35 15.500 31 13L16 3.500C11 .5 7.500 3 7.500 8V25C7.500 28.500 10 29 13 27.500" stroke="currentColor" strokeWidth="2.6" strokeLinecap="round" strokeLinejoin="round" />
        <path d="M14 13L21 17.500L14 22Z" fill="currentColor" />
        <path d="M23.500 14.500V20.500" stroke="currentColor" strokeWidth="1.6" />
      </svg>
      <div className="ml-3 flex flex-col gap-1 font-['Liberation_Sans','Noto_Sans_CJK_SC',sans-serif]">
        <span className="text-[26px] leading-[26px] font-medium whitespace-nowrap">溜溜自学</span>
        <span className="font-['DejaVu_Sans',sans-serif] text-[12px] leading-3 whitespace-nowrap">zixue.3D66.COM</span>
      </div>
    </aside>
  );
}

export default function App() {
  return (
    <div className="relative flex h-screen flex-col overflow-hidden bg-[#6c6c6c] font-['Open_Sans','Noto_Sans_CJK_SC',sans-serif]">
      <Header />
      <main className="flex min-h-0 flex-1">
        <div className="min-w-0 flex-1 bg-black"><Drawing /></div>
        <div className="flex w-4 shrink-0 flex-col items-center border-r-2 border-[#bbb] bg-[#eee] py-1">
          <IconButton label="向上滚动"><Tri dir="up" className="h-1.5 w-1.5 text-[#222]" /></IconButton>
          <div className="basis-[117px]" />
          <Thumb className="h-[11px] w-[11px]" />
          <div className="flex-1" />
          <IconButton label="向下滚动"><Tri dir="down" className="h-1.5 w-1.5 text-[#222]" /></IconButton>
        </div>
      </main>
      <LayoutTabs />
      <div className="h-[3px] shrink-0 border-t border-[#ddd] bg-[#777]" />
      <CommandPane />
      <StatusBar />
      <Watermark />
    </div>
  );
}
